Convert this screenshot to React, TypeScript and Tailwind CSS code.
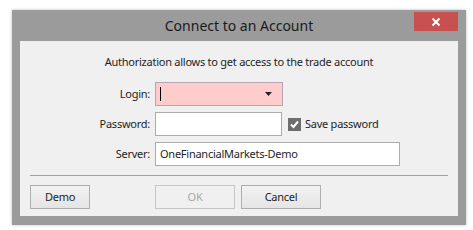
import React from "react";

function Field({ label, children }: { label: string; children: React.ReactNode }) {
  return (
    <div className="flex items-center h-[24px]">
      <div className="w-[135px] pr-[5px] text-right">{label}</div>
      {children}
    </div>
  );
}

export default function App() {
  return (
    <div
      className="w-[473px] h-[230px] bg-white pl-[12px] pt-[10px] text-[11px] tracking-[-0.25px] text-[#1e1e1e]"
      style={{ fontFamily: '"Noto Sans", "Open Sans", sans-serif' }}
    >
      <div className="w-[454px] h-[215px] bg-[#9b9b9b] flex flex-col shadow-[0_0_3px_rgba(0,0,0,0.25)]">
        {/* title bar */}
        <div className="relative h-[31px] flex items-center justify-center">
          <span className="text-[14px] tracking-normal text-[#1a1a1a]">Connect to an Account</span>
          <button className="absolute right-[8px] top-[2px] w-[44px] h-[19px] bg-[#c75050] flex items-center justify-center">
            <svg width="10" height="10" viewBox="0 0 10 10">
              <path d="M1.5 1.5 L8.5 8.5 M8.5 1.5 L1.5 8.5" stroke="white" strokeWidth="2" />
            </svg>
          </button>
        </div>

        {/* client */}
        <div className="flex-1 mx-[8px] mb-[9px] bg-[#f0f0f0] flex flex-col">
          <div className="h-[41px] flex items-center justify-center pt-[2px]">
            Authorization allows to get access to the trade account
          </div>

          <div className="flex flex-col gap-[6px]">
            <Field label="Login:">
              <div className="w-[128px] h-[24px] bg-[#ffcccc] border border-[#b7a4b4] flex items-center justify-between pl-[4px] pr-[10px]">
                <div className="w-px h-[14px] bg-black" />
                <svg width="7" height="4" viewBox="0 0 7 4">
                  <path d="M0 0 H7 L3.5 4 Z" fill="#222" />
                </svg>
              </div>
            </Field>
            <Field label="Password:">
              <div className="w-[127px] h-[24px] bg-white border border-[#acacac]" />
              <div className="ml-[6px] w-[13px] h-[13px] bg-[#6d6d6d] flex items-center justify-center">
                <svg width="11" height="11" viewBox="0 0 11 11">
                  <path d="M2 5.5 L4.5 8 L9 2.5" stroke="white" strokeWidth="2" fill="none" />
                </svg>
              </div>
              <span className="ml-[4px]">Save password</span>
            </Field>
            <Field label="Server:">
              <div className="w-[245px] h-[24px] bg-white border border-[#acacac] flex items-center pl-[4px]">
                OneFinancialMarkets-Demo
              </div>
            </Field>
          </div>

          <div className="mt-[9px] mx-[10px] h-px bg-[#a0a0a0]" />

          <div className="flex items-center mt-[9px] px-[10px]">
            <button className="w-[60px] h-[24px] border border-[#adadad] bg-gradient-to-b from-[#f2f2f2] to-[#e5e5e5]">
              Demo
            </button>
            <button className="ml-[65px] w-[80px] h-[24px] border border-[#c6c6c6] bg-[#f0f0f0] text-[#a8a8a8]">
              OK
            </button>
            <button className="ml-[6px] w-[80px] h-[24px] border border-[#adadad] bg-gradient-to-b from-[#f2f2f2] to-[#e5e5e5]">
              Cancel
            </button>
          </div>
        </div>
      </div>
    </div>
  );
}
